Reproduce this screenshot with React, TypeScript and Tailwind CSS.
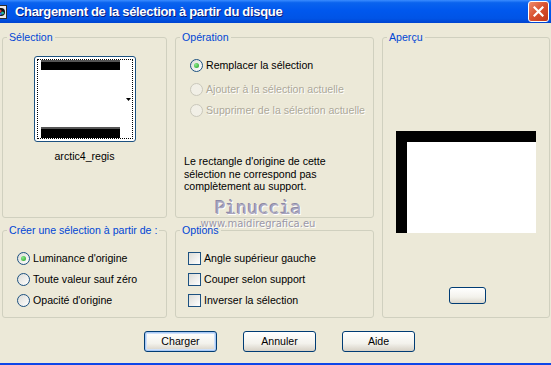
import React from "react";

const font = "font-['Liberation_Sans',Arial,sans-serif]";

function Radio({ checked, disabled }: { checked?: boolean; disabled?: boolean }) {
  return (
    <span
      className={
        disabled
          ? "flex h-[13px] w-[13px] shrink-0 items-center justify-center rounded-full border border-[#CAC8BB] bg-[#F1EFE6]"
          : "flex h-[13px] w-[13px] shrink-0 items-center justify-center rounded-full border border-[#1C5180] bg-[linear-gradient(135deg,#DCDCD7,#FFFFFF)]"
      }
    >
      {checked && <span className="h-[5px] w-[5px] rounded-full bg-[radial-gradient(circle_at_35%_35%,#8BE88B,#21A121)]" />}
    </span>
  );
}

function Check() {
  return <span className="h-[13px] w-[13px] shrink-0 border border-[#1C5180] bg-[linear-gradient(135deg,#DCDCD7,#FFFFFF)]" />;
}

function Row({ control, label, disabled }: { control: React.ReactNode; label: string; disabled?: boolean }) {
  return (
    <div className="flex h-[16px] items-center gap-[3px] whitespace-nowrap">
      {control}
      <span className={disabled ? "text-[#ACA899] [text-shadow:1px_1px_0_#fff]" : "text-black"}>{label}</span>
    </div>
  );
}

function Group({ title, className, children }: { title: string; className?: string; children: React.ReactNode }) {
  return (
    <fieldset className={`min-w-0 rounded-[3px] border border-[#D0D0BF] ${className ?? ""}`}>
      <legend className="ml-[4px] whitespace-nowrap px-[2px] leading-[13px] text-[#0046D5]">{title}</legend>
      {children}
    </fieldset>
  );
}

function XpButton({ label, def }: { label: string; def?: boolean }) {
  return (
    <button
      className={
        def
          ? "h-[21px] w-[73px] rounded-[3px] border border-[#003C74] bg-[linear-gradient(to_bottom,#FFFFFF,#F3F2EC_60%,#D6D0C5)] text-black shadow-[inset_0_0_0_1px_#A8C8F5,inset_0_0_0_2px_#CEE0F9]"
          : "h-[21px] w-[73px] rounded-[3px] border border-[#003C74] bg-[linear-gradient(to_bottom,#FFFFFF,#F3F2EC_60%,#D6D0C5)] text-black"
      }
    >
      {label}
    </button>
  );
}

export default function App() {
  return (
    <div className={`relative flex h-[365px] w-[551px] flex-col overflow-hidden bg-[#ECE9D8] text-[10.6px] leading-[13px] ${font}`}>
      {/* title bar */}
      <div className="flex h-[23px] shrink-0 items-center bg-[linear-gradient(to_bottom,#3A8CFF_0%,#0A63EE_12%,#0058EE_45%,#0054E6_80%,#0044D0_100%)] pr-[2px]">
        <svg width="8" height="14" viewBox="0 0 8 14" className="mt-[1px]">
          <rect x="-4" y="0" width="11" height="14" fill="#2b2b2b" />
          <rect x="-4" y="1" width="10" height="12" fill="#e8e8e8" />
          <circle cx="1" cy="7" r="4" fill="#111" />
          <circle cx="0" cy="6" r="1.6" fill="#d33" />
          <circle cx="2.5" cy="8" r="1.5" fill="#2b9" />
          <circle cx="0.5" cy="9" r="1.2" fill="#36e" />
        </svg>
        <span className="ml-[7px] text-[13px] font-bold tracking-[-0.32px] text-white [text-shadow:1px_1px_0_#0A1B7A]">
          Chargement de la sélection à partir du disque
        </span>
        <button className="ml-auto flex h-[21px] w-[21px] items-center justify-center rounded-[3px] border border-white bg-[linear-gradient(135deg,#EE8B6C,#D8502F_50%,#C2381A)]">
          <svg width="11" height="11" viewBox="0 0 11 11">
            <path d="M1.5 1.5 L9.5 9.5 M9.5 1.5 L1.5 9.5" stroke="white" strokeWidth="2.2" strokeLinecap="square" />
          </svg>
        </button>
      </div>

      {/* body */}
      <div className="flex flex-1 flex-col pl-[2px] pt-[8px]">
        <div className="grid grid-cols-[165px_199px_168px] grid-rows-[187px_94px] gap-x-[8px] gap-y-[6px]">
          <Group title="Sélection" className="flex flex-col items-center">
            <div className="relative mt-[12px] h-[86px] w-[102px] rounded-[3px] border border-[#1C5180] bg-white p-[2px]">
              <div className="flex h-full flex-col justify-between border border-dotted border-black pl-[3px]">
                <div className="h-[10px] w-[79px] border-t-2 border-[#555] bg-black" />
                <div className="h-[11px] w-[79px] border-t-2 border-[#555] bg-black" />
              </div>
              <svg width="5" height="3" viewBox="0 0 5 3" className="absolute right-[4px] top-[41px]">
                <path d="M0 0 H5 L2.5 3 Z" fill="black" />
              </svg>
            </div>
            <div className="mt-[8px]">arctic4_regis</div>
          </Group>

          <Group title="Opération">
            <div className="pl-[14px]">
              <div className="mt-[13px]">
                <Row control={<Radio checked />} label="Remplacer la sélection" />
              </div>
              <div className="mt-[8px]">
                <Row control={<Radio disabled />} label="Ajouter à la sélection actuelle" disabled />
              </div>
              <div className="mt-[5px]">
                <Row control={<Radio disabled />} label="Supprimer de la sélection actuelle" disabled />
              </div>
            </div>
            <p className="ml-[8px] mt-[37px] leading-[12.5px]">
              Le rectangle d'origine de cette
              <br />
              sélection ne correspond pas
              <br />
              complètement au support.
            </p>
          </Group>

          <Group title="Aperçu" className="row-span-2 flex flex-col">
            <div className="ml-[13px] mt-[87px] h-[102px] w-[140px] border-l-[11px] border-t-[11px] border-black bg-white" />
            <button className="ml-[66px] mt-[54px] h-[17px] w-[37px] rounded-[3px] border border-[#003C74] bg-[linear-gradient(to_bottom,#FFFFFF,#F3F2EC_60%,#DCD7CC)]" />
          </Group>

          <Group title="Créer une sélection à partir de :">
            <div className="mt-[13px] flex flex-col gap-[5px] pl-[14px]">
              <Row control={<Radio checked />} label="Luminance d'origine" />
              <Row control={<Radio />} label="Toute valeur sauf zéro" />
              <Row control={<Radio />} label="Opacité d'origine" />
            </div>
          </Group>

          <Group title="Options">
            <div className="mt-[13px] flex flex-col gap-[5px] pl-[12px]">
              <Row control={<Check />} label="Angle supérieur gauche" />
              <Row control={<Check />} label="Couper selon support" />
              <Row control={<Check />} label="Inverser la sélection" />
            </div>
          </Group>
        </div>

        <div className="mt-[13px] flex gap-[26px] pl-[142px]">
          <XpButton label="Charger" def />
          <XpButton label="Annuler" />
          <XpButton label="Aide" />
        </div>
      </div>

      <div className="h-[2px] shrink-0 bg-[#0D47E8]" />

      {/* watermark */}
      <div className="pointer-events-none absolute left-[196px] top-[197px] flex w-[124px] flex-col items-center">
        <span className="font-['DejaVu_Sans_Mono',monospace] text-[18px] leading-[21px] text-[#A7A4BE] [text-shadow:1px_1px_0_#ffffff,-1px_-1px_0_#8c89a6]">
          Pinuccia
        </span>
        <span className="font-['DejaVu_Sans',sans-serif] text-[10px] leading-[12px] text-[#9a98a8] [text-shadow:1px_1px_0_#ffffff]">
          www.maidiregrafica.eu
        </span>
      </div>
    </div>
  );
}
